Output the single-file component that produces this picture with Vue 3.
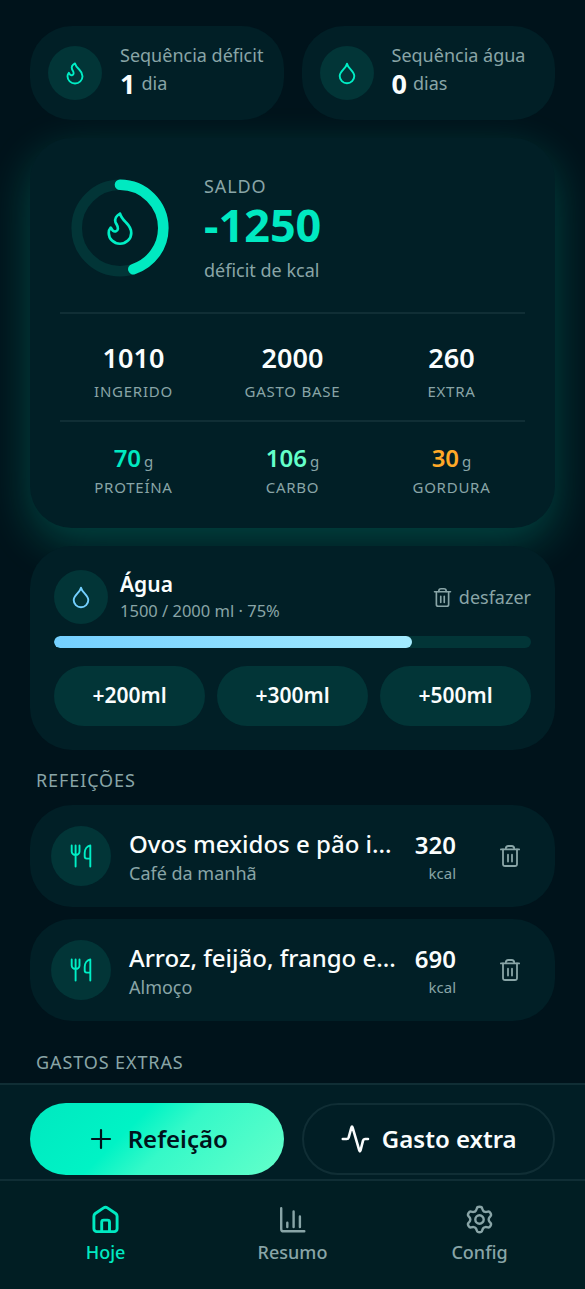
<script setup>
import { h } from 'vue'

const shapes = {
  flame: ['M12 2.4C9.6 3.7 8.3 6.1 9 8.2C9.6 9.7 10.9 10.8 10.6 12.6C10.3 14.3 8.5 14.8 7.3 13.8C6.4 13.1 6.4 12.2 5.8 11.8C5.1 12.6 4.5 13.9 4.5 15.3A7.5 7.2 0 0 0 19.5 15.3C19.5 11.8 17.9 10.2 16.2 8.5C14.4 6.7 12.7 5.1 12 2.4Z'],
  drop: ['M12 2.6C11.6 6.8 4.7 10 4.7 15.1A7.3 7.2 0 0 0 19.3 15.1C19.3 10 12.4 6.8 12 2.6Z'],
  trash: ['M2.9 5.4H21.1', 'M7.8 5.2V4.6A2.6 2.6 0 0 1 10.4 2H13.6A2.6 2.6 0 0 1 16.2 4.6V5.2', 'M5 5.4V19.9A2.1 2.1 0 0 0 7.1 22H16.9A2.1 2.1 0 0 0 19 19.9V5.4', 'M10 10.7V17.6M14 10.7V17.6'],
  meal: ['M2.7 1.4V7.6A3.9 3.4 0 0 0 10.5 7.6V1.4M6.6 1.4V22.5', 'M21.3 22.5V1.5C18 2.1 15.7 5.2 15.7 9V12.6A2 2 0 0 0 17.7 14.6H21.3'],
  plus: ['M12 3V21M3 12H21'],
}

function gearPath() {
  const pts = []
  for (let i = 0; i < 6; i++) {
    const a = i * 60 - 90
    for (const [d, r] of [[-17, 10.2], [-10, 12.9], [10, 12.9], [17, 10.2], [30, 8.9]]) {
      const t = ((a + d) * Math.PI) / 180
      pts.push([13.5 + r * Math.cos(t), 13.5 + r * Math.sin(t)])
    }
  }
  const mid = (p, q) => `${((p[0] + q[0]) / 2).toFixed(2)} ${((p[1] + q[1]) / 2).toFixed(2)}`
  let d = `M${mid(pts[pts.length - 1], pts[0])}`
  pts.forEach((p, i) => {
    d += `Q${p[0].toFixed(2)} ${p[1].toFixed(2)} ${mid(p, pts[(i + 1) % pts.length])}`
  })
  return d + 'Z'
}

const Icon = (props) =>
  h(
    'svg',
    {
      viewBox: '0 0 24 24', width: props.size, height: props.size, fill: 'none',
      stroke: 'currentColor', 'stroke-width': props.weight || 1.9,
      'stroke-linecap': 'round', 'stroke-linejoin': 'round',
    },
    shapes[props.name].map((d) => h('path', { d })),
  )
Icon.props = ['name', 'size', 'weight']

const streaks = [
  { icon: 'flame', label: 'Sequência déficit', value: 1, unit: 'dia' },
  { icon: 'drop', label: 'Sequência água', value: 0, unit: 'dias' },
]
const totals = [
  { value: 1010, label: 'Ingerido' },
  { value: 2000, label: 'Gasto base' },
  { value: 260, label: 'Extra' },
]
const macros = [
  { value: 70, label: 'Proteína', tone: 'teal' },
  { value: 106, label: 'Carbo', tone: 'mint' },
  { value: 30, label: 'Gordura', tone: 'orange' },
]
const meals = [
  { title: 'Ovos mexidos e pão i...', kind: 'Café da manhã', kcal: 320 },
  { title: 'Arroz, feijão, frango e...', kind: 'Almoço', kcal: 690 },
]
const water = { current: 1500, goal: 2000 }
const pct = (water.current / water.goal) * 100
const nav = [
  { label: 'Hoje', active: true, paths: ['M1.9 10.3C1.9 9.1 2.4 8.2 3.3 7.5L11.6 1.9C12.8 1.1 14.2 1.1 15.4 1.9L23.7 7.5C24.6 8.2 25.1 9.1 25.1 10.3V22.8A2.8 2.8 0 0 1 22.3 25.6H4.7A2.8 2.8 0 0 1 1.9 22.8Z', 'M9.7 25.3V16.1A2 2 0 0 1 11.7 14.1H15.5A2 2 0 0 1 17.5 16.1V25.3'] },
  { label: 'Resumo', paths: ['M2.2 2.2V22.9A2.4 2.4 0 0 0 4.6 25.3H25.3', 'M8.3 16.8V21M14.6 5.4V21M20.9 10.4V21'] },
  { label: 'Config', paths: [gearPath(), 'M17.7 13.5A4.2 4.2 0 1 1 9.3 13.5A4.2 4.2 0 1 1 17.7 13.5Z'] },
]
</script>

<template>
  <div class="app">
    <main class="content">
      <section class="streaks">
        <div v-for="s in streaks" :key="s.label" class="card streak">
          <span class="bubble"><Icon :name="s.icon" :size="24" /></span>
          <div class="streak-text">
            <div class="streak-label">{{ s.label }}</div>
            <div class="streak-value"><b>{{ s.value }}</b><span>{{ s.unit }}</span></div>
          </div>
        </div>
      </section>

      <section class="card hero">
        <div class="balance">
          <div class="ring">
            <svg class="dial" width="120" height="120" viewBox="0 0 120 120">
              <circle class="track" cx="60" cy="60" r="43.3" />
              <circle class="arc" cx="60" cy="60" r="43.3" pathLength="100" transform="rotate(-90 60 60)" />
            </svg>
            <Icon class="ring-icon" name="flame" :size="36" :weight="1.8" />
          </div>
          <div class="balance-text">
            <div class="overline">Saldo</div>
            <div class="balance-value">-1250</div>
            <div class="balance-note">déficit de kcal</div>
          </div>
        </div>
        <div class="stats totals">
          <div v-for="t in totals" :key="t.label">
            <div class="total-value">{{ t.value }}</div>
            <div class="stat-label">{{ t.label }}</div>
          </div>
        </div>
        <div class="stats macros">
          <div v-for="m in macros" :key="m.label">
            <div class="macro-value" :class="m.tone">{{ m.value }}<small>g</small></div>
            <div class="stat-label">{{ m.label }}</div>
          </div>
        </div>
      </section>

      <section class="card water">
        <div class="water-head">
          <span class="bubble blue"><Icon name="drop" :size="24" /></span>
          <div class="water-text">
            <div class="water-title">Água</div>
            <div class="water-sub">{{ water.current }} / {{ water.goal }} ml · {{ pct }}%</div>
          </div>
          <button class="undo"><Icon name="trash" :size="21" />desfazer</button>
        </div>
        <div class="bar"><div class="fill" :style="{ width: pct + '%' }"></div></div>
        <div class="adds">
          <button v-for="n in [200, 300, 500]" :key="n">+{{ n }}ml</button>
        </div>
      </section>

      <h2 class="section-title">Refeições</h2>
      <section class="meals">
        <article v-for="m in meals" :key="m.title" class="card meal">
          <span class="bubble large"><Icon name="meal" :size="24" /></span>
          <div class="meal-text">
            <div class="meal-title">{{ m.title }}</div>
            <div class="meal-kind">{{ m.kind }}</div>
          </div>
          <div class="meal-kcal">
            <div>{{ m.kcal }}</div>
            <small>kcal</small>
          </div>
          <button class="remove"><Icon name="trash" :size="24" :weight="1.8" /></button>
        </article>
      </section>
      <h2 class="section-title extras">Gastos extras</h2>
    </main>

    <div class="actions">
      <button class="primary"><Icon class="plus" name="plus" :size="24" :weight="2.2" />Refeição</button>
      <button class="outline">
        <svg width="30" height="30" viewBox="0 0 30 30" fill="none" stroke="currentColor" stroke-width="2.6" stroke-linecap="round" stroke-linejoin="round">
          <path d="M2.8 15H6.6Q8.2 15 8.7 13.4L11.3 3.8Q12 1.5 12.7 3.8L19.2 26.2Q19.9 28.5 20.6 26.2L23 16.6Q23.4 15 25 15H28" />
        </svg>
        Gasto extra
      </button>
    </div>
    <nav class="nav">
      <a v-for="n in nav" :key="n.label" :class="{ active: n.active }">
        <svg width="27" height="27" viewBox="0 0 27 27"><path v-for="d in n.paths" :key="d" :d="d" /></svg>
        <span>{{ n.label }}</span>
      </a>
    </nav>
  </div>
</template>

<style>
body { background: #00131b; }
</style>

<style scoped>
* { box-sizing: border-box; }
.app {
  width: 585px; height: 1289px; overflow: hidden;
  display: flex; flex-direction: column;
  background: #00131b; color: #fafdfd;
  font-family: "Noto Sans", sans-serif;
  font-size: 18px; line-height: 24px;
}
svg { display: block; flex: none; overflow: visible; }
button { font: inherit; border: 0; background: none; color: inherit; padding: 0; }
.content { flex: 1; min-height: 0; padding: 26px 30px 0; overflow: hidden; }
.card { background: #011f26; border-radius: 42px; }
.bubble {
  width: 54px; height: 54px; border-radius: 50%; flex: none;
  display: grid; place-items: center;
  background: #023537; color: #00eec5;
}
.bubble.large { width: 60px; height: 60px; }
.bubble.blue { color: #74d0ff; }

.streaks { display: grid; grid-template-columns: 1fr 1fr; gap: 18px; }
.streak { height: 94px; padding: 0 18px 1px; display: flex; align-items: center; gap: 18px; white-space: nowrap; }
.streak-text { padding-bottom: 3px; }
.streak-label { color: #89a5a7; height: 25px; }
.streak-value { display: flex; align-items: center; gap: 6px; height: 31px; line-height: 31px; color: #89a5a7; }
.streak-value b { font-size: 27px; color: #fafdfd; }

.hero {
  margin-top: 18px; height: 390px; padding: 0 30px;
  box-shadow: 0 15px 45px rgba(0, 236, 196, 0.23);
}
.balance { height: 174px; display: flex; align-items: center; gap: 24px; padding-top: 6px; }
.ring { width: 120px; height: 120px; display: grid; place-items: center; color: #00eec5; }
.ring > * { grid-area: 1 / 1; }
.dial circle { fill: none; stroke-width: 10.6; }
.track { stroke: #023537; }
.dial .arc { stroke: #00e9c1; stroke-linecap: round; stroke-dasharray: 45 100; }
.overline { color: #89a5a7; text-transform: uppercase; letter-spacing: 0.9px; height: 23px; line-height: 22px; }
.balance-value { font-size: 45px; line-height: 54px; padding-bottom: 2px; font-weight: 700; color: #00e9c1; }
.balance-note { color: #89a5a7; height: 27px; line-height: 32px; }
.stats { display: grid; grid-template-columns: repeat(3, 1fr); gap: 12px; text-align: center; border-top: 2px solid #102e35; }
.totals { height: 108px; padding-top: 26px; }
.macros { height: 107px; padding-top: 20px; }
.total-value { font-size: 27px; line-height: 36px; font-weight: 600; }
.stat-label { font-size: 15px; line-height: 22px; padding-top: 4px; letter-spacing: 0.75px; text-transform: uppercase; color: #89a5a7; }
.macro-value { font-size: 24px; height: 28px; line-height: 31px; font-weight: 600; }
.macro-value + .stat-label { padding-top: 6px; }
.macro-value small { font-size: 15px; font-weight: 400; margin-left: 3px; color: #89a5a7; }
.teal { color: #00e9c1; }
.mint { color: #64ffca; }
.orange { color: #ffa928; }

.water { margin-top: 18px; height: 204px; padding: 24px; }
.water-head { height: 54px; display: flex; align-items: center; gap: 12px; }
.water-text { flex: 1; }
.water-title { font-size: 21px; height: 28px; line-height: 26px; font-weight: 600; }
.water-sub { font-size: 16.5px; line-height: 24px; color: #89a5a7; }
.undo { display: flex; align-items: center; gap: 6px; color: #89a5a7; }
.bar { height: 12px; margin-top: 12px; border-radius: 6px; background: #023537; overflow: hidden; }
.fill { height: 100%; border-radius: 6px; background: linear-gradient(90deg, #74d0ff, #a4ebff); }
.adds { display: grid; grid-template-columns: repeat(3, 1fr); gap: 12px; margin-top: 18px; }
.adds button { height: 60px; border-radius: 30px; background: #023537; font-size: 21px; font-weight: 600; padding-bottom: 2px; }

.section-title { margin: 18px 6px 0; font-size: 18px; line-height: 24px; font-weight: 400; letter-spacing: 0.9px; text-transform: uppercase; color: #89a5a7; }
.section-title.extras { margin-top: 29px; }
.meals { display: grid; grid-template-columns: minmax(0, 1fr); gap: 12px; margin-top: 13px; }
.meal { height: 102px; padding: 0 21px 1px; display: flex; align-items: center; }
.meal-text { flex: 1; min-width: 0; margin: 0 18px; padding-top: 2px; }
.meal-title { font-size: 24px; line-height: 33px; font-weight: 500; white-space: nowrap; }
.meal-kind { color: #89a5a7; line-height: 26px; }
.meal-kcal { text-align: right; font-size: 24px; line-height: 33px; font-weight: 600; padding-top: 2px; }
.meal-kcal small { display: block; font-size: 15px; line-height: 24px; font-weight: 400; color: #89a5a7; }
.remove { width: 48px; height: 48px; margin-left: 30px; display: grid; place-items: center; color: #89a5a7; }

.actions { flex: none; height: 96px; padding: 18px 30px 0; display: grid; grid-template-columns: 1fr 1fr; gap: 18px; background: #011e25; border-top: 2px solid #102e35; }
.actions button { height: 72px; border-radius: 36px; display: flex; align-items: center; justify-content: center; font-size: 24px; font-weight: 600; white-space: nowrap; }
.primary { background: linear-gradient(135deg, #00e8c0 0%, #00f3c5 38%, #35f9c8 55%, #64ffca 100%); color: #00131b; gap: 15px; padding-left: 3px; }
.actions .outline { border: 2px solid #102e35; gap: 12px; }
.nav { flex: none; height: 110px; padding: 25px 12px 0; display: grid; grid-template-columns: repeat(3, 1fr); background: #011e23; border-top: 2px solid #102e35; }
.nav a { display: flex; flex-direction: column; align-items: center; color: #89a5a7; font-weight: 500; }
.nav span { margin-top: 7px; }
.nav path { fill: none; stroke: currentColor; stroke-width: 2.4; stroke-linecap: round; stroke-linejoin: round; }
.nav .active { color: #00e9c1; }
.nav .active path { stroke-width: 2.9; }
</style>
